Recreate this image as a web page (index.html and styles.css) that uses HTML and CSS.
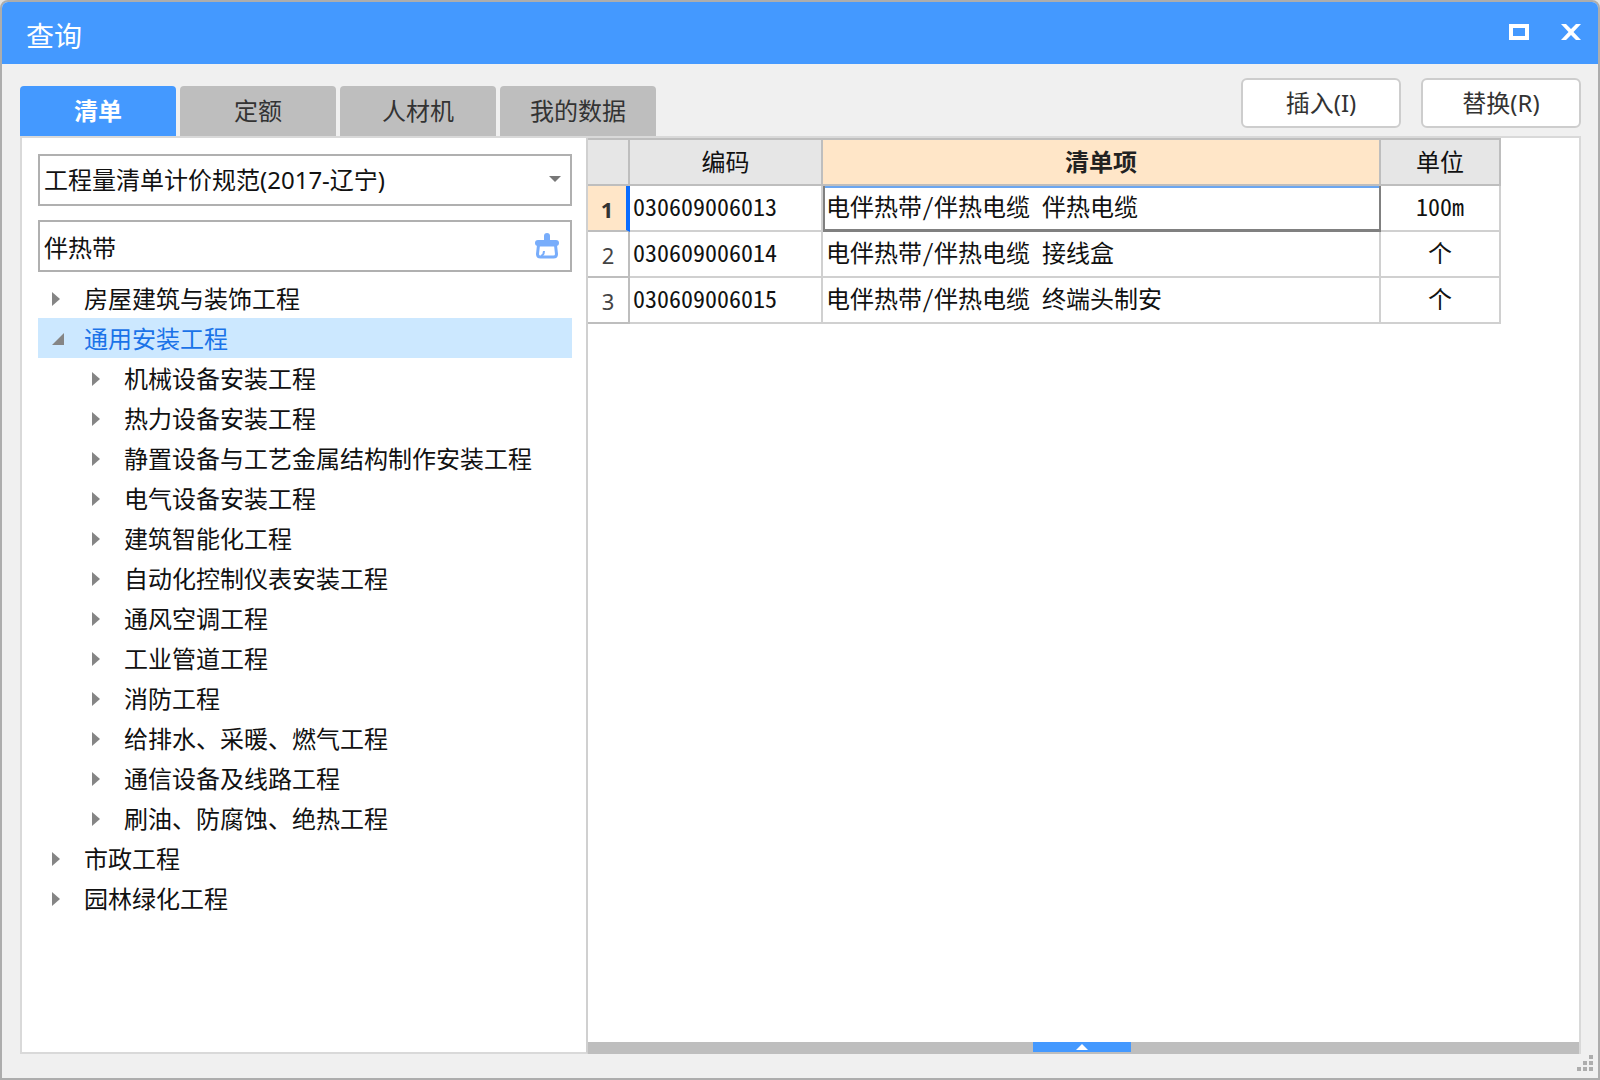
FILE: index.html
```html
<!DOCTYPE html>
<html lang="zh-CN">
<head>
<meta charset="utf-8">
<meta name="viewport" content="width=device-width, initial-scale=1">
<title>查询</title>
<link rel="stylesheet" href="styles.css">
</head>
<body>
<div class="window">
  <header class="titlebar">
    <h1 class="title">查询</h1>
    <div class="window-controls">
      <button class="control" type="button" aria-label="最大化">
        <svg width="22" height="18" viewBox="0 0 22 18"><path d="M1 1h20v16H1zM5 5v8h12V5z" fill="#fff" fill-rule="evenodd"/></svg>
      </button>
      <button class="control" type="button" aria-label="关闭">
        <svg width="22" height="18" viewBox="0 0 22 18"><path d="M1 1h5l5 5 5-5h5l-7.500 8 7.500 8h-5l-5-5-5 5H1l7.500-8z" fill="#fff"/></svg>
      </button>
    </div>
  </header>

  <div class="toolbar">
    <div class="tabs" role="tablist">
      <button class="tab tab-active" type="button" role="tab" aria-selected="true">清单</button>
      <button class="tab" type="button" role="tab" aria-selected="false">定额</button>
      <button class="tab" type="button" role="tab" aria-selected="false">人材机</button>
      <button class="tab" type="button" role="tab" aria-selected="false">我的数据</button>
    </div>
    <div class="actions">
      <button class="action" type="button">插入(I)</button>
      <button class="action" type="button">替换(R)</button>
    </div>
  </div>

  <main class="panels">
    <aside class="sidebar">
      <div class="field">
        <select class="field-input" aria-label="计价规范"><option>工程量清单计价规范(2017-辽宁)</option></select>
        <svg class="field-arrow" width="12" height="6" viewBox="0 0 12 6"><path d="M0 0h12L6 6z" fill="#777"/></svg>
      </div>
      <div class="field">
        <input class="field-input" type="text" value="伴热带" aria-label="搜索">
        <button class="clear" type="button" aria-label="清空">
          <svg width="24" height="26" viewBox="0 0 24 26">
            <path d="M12 3v6" stroke="#78adfb" stroke-width="6" stroke-linecap="round"/>
            <rect x="0" y="7" width="24" height="6" rx="3" fill="#78adfb"/>
            <path d="M3.500 12 2.500 21q0 3 3 3h13q3 0 3-3l-1-9" fill="#fff" stroke="#78adfb" stroke-width="3" stroke-linejoin="round"/>
            <path d="M3 12h18" stroke="#78adfb" stroke-width="3"/>
            <path d="M9 18q0 4-3 5" fill="none" stroke="#78adfb" stroke-width="2"/>
          </svg>
        </button>
      </div>
      <ul class="tree">
        <li><button class="node" type="button"><span class="arrow"></span>房屋建筑与装饰工程</button></li>
        <li>
          <button class="node node-selected" type="button" aria-expanded="true"><span class="arrow arrow-open"></span>通用安装工程</button>
          <ul class="branch">
            <li><button class="node" type="button"><span class="arrow"></span>机械设备安装工程</button></li>
            <li><button class="node" type="button"><span class="arrow"></span>热力设备安装工程</button></li>
            <li><button class="node" type="button"><span class="arrow"></span>静置设备与工艺金属结构制作安装工程</button></li>
            <li><button class="node" type="button"><span class="arrow"></span>电气设备安装工程</button></li>
            <li><button class="node" type="button"><span class="arrow"></span>建筑智能化工程</button></li>
            <li><button class="node" type="button"><span class="arrow"></span>自动化控制仪表安装工程</button></li>
            <li><button class="node" type="button"><span class="arrow"></span>通风空调工程</button></li>
            <li><button class="node" type="button"><span class="arrow"></span>工业管道工程</button></li>
            <li><button class="node" type="button"><span class="arrow"></span>消防工程</button></li>
            <li><button class="node" type="button"><span class="arrow"></span>给排水、采暖、燃气工程</button></li>
            <li><button class="node" type="button"><span class="arrow"></span>通信设备及线路工程</button></li>
            <li><button class="node" type="button"><span class="arrow"></span>刷油、防腐蚀、绝热工程</button></li>
          </ul>
        </li>
        <li><button class="node" type="button"><span class="arrow"></span>市政工程</button></li>
        <li><button class="node" type="button"><span class="arrow"></span>园林绿化工程</button></li>
      </ul>
    </aside>

    <section class="results">
      <div class="grid-area">
        <table class="grid">
          <colgroup><col class="col-index"><col class="col-code"><col><col class="col-unit"></colgroup>
          <thead>
            <tr><th></th><th scope="col">编码</th><th scope="col" class="current">清单项</th><th scope="col">单位</th></tr>
          </thead>
          <tbody>
            <tr><th scope="row" class="index index-current">1</th><td>030609006013</td><td class="editing">电伴热带/伴热电缆 伴热电缆</td><td class="unit">100m</td></tr>
            <tr><th scope="row" class="index">2</th><td>030609006014</td><td>电伴热带/伴热电缆 接线盒</td><td class="unit">个</td></tr>
            <tr><th scope="row" class="index">3</th><td>030609006015</td><td>电伴热带/伴热电缆 终端头制安</td><td class="unit">个</td></tr>
          </tbody>
        </table>
      </div>
      <div class="splitter">
        <button class="splitter-handle" type="button" aria-label="展开">
          <svg width="12" height="6" viewBox="0 0 12 6"><path d="M0 6h12L6 0z" fill="#fff"/></svg>
        </button>
      </div>
    </section>
  </main>

  <footer class="statusbar">
    <svg width="18" height="18" viewBox="0 0 18 18" fill="#adadad">
      <path d="M12 0h4v4h-4zM6 6h4v4H6zM12 6h4v4h-4zM0 12h4v4H0zM6 12h4v4H6zM12 12h4v4h-4z"/>
    </svg>
  </footer>
</div>
</body>
</html>
```
FILE: styles.css
```css
* {
  box-sizing: border-box;
}

body {
  margin: 0;
  background: #e4e4e4;
  color: #111;
  font: 24px/40px "Noto Sans", "Noto Sans CJK SC", sans-serif;
}

button,
input,
select {
  margin: 0;
  padding: 0;
  border: 0;
  background: none;
  color: inherit;
  font: inherit;
}

svg {
  display: block;
}

.window {
  display: flex;
  flex-direction: column;
  min-height: 100vh;
  border: 2px solid #adadad;
  border-radius: 8px 8px 0 0;
  background: #f0f0f0;
  overflow: hidden;
}

.titlebar {
  display: flex;
  justify-content: space-between;
  height: 62px;
  padding: 0 16px 0 24px;
  background: #4499ff;
  color: #fff;
}

.title {
  margin: 0;
  padding-top: 4px;
  font-size: 28px;
  font-weight: 400;
  line-height: 60px;
}

.window-controls {
  display: flex;
  align-items: center;
  gap: 30px;
  padding-bottom: 2px;
}

.toolbar {
  display: flex;
  justify-content: space-between;
  height: 72px;
  padding: 14px 17px 0 18px;
}

.tabs {
  display: flex;
  align-items: flex-end;
  gap: 4px;
}

.tab {
  width: 156px;
  height: 50px;
  border-radius: 4px 4px 0 0;
  background: #bebebe;
  color: #333;
}

.tab-active {
  background: #4499ff;
  color: #fff;
  font-weight: 700;
}

.actions {
  display: flex;
  gap: 20px;
}

.action {
  width: 160px;
  height: 50px;
  border: 2px solid #cdcdcd;
  border-radius: 6px;
  background: #fff;
  color: #333;
}

.panels {
  display: flex;
  flex: 1;
  margin: 0 17px 0 18px;
  border: 2px solid #d9d9d9;
  border-bottom: 0;
  background: #fff;
}

.sidebar {
  flex: none;
  width: 566px;
  padding: 16px 14px 16px 16px;
  border-right: 2px solid #d0d0d0;
  border-bottom: 2px solid #d9d9d9;
}

.field {
  position: relative;
  margin-bottom: 14px;
}

.field-input {
  display: block;
  width: 100%;
  height: 52px;
  padding: 0 48px 0 4px;
  border: 2px solid #b0b0b0;
  border-radius: 0;
  background: #fff;
  appearance: none;
}

.field-arrow {
  position: absolute;
  top: 22px;
  right: 11px;
  pointer-events: none;
}

.clear {
  position: absolute;
  top: 13px;
  right: 13px;
}

.tree,
.branch {
  margin: 0;
  padding: 0;
  list-style: none;
}

.tree {
  margin-top: -8px;
}

.node {
  display: flex;
  align-items: center;
  gap: 20px;
  width: 100%;
  height: 40px;
  padding-top: 2px;
  padding-left: 14px;
  text-align: left;
  white-space: nowrap;
}

.branch .node {
  padding-left: 54px;
}

.node-selected {
  background: #cce8ff;
  color: #1a73e8;
}

.arrow {
  flex: none;
  width: 12px;
  height: 14px;
  background: #858585;
  clip-path: polygon(0 0, 8px 50%, 0 100%);
}

.arrow-open {
  height: 12px;
  clip-path: polygon(100% 0, 100% 100%, 0 100%);
}

.results {
  display: flex;
  flex: 1;
  flex-direction: column;
  min-width: 0;
}

.grid-area {
  flex: 1;
  padding-right: 78px;
}

/* Half-width Latin keeps codes aligned with the full-width characters. */
.grid {
  width: 100%;
  border-spacing: 0;
  border-top: 2px solid #bebebe;
  font-family: "Noto Sans CJK SC", sans-serif;
  font-feature-settings: "hwid";
  table-layout: fixed;
}

.col-index {
  width: 42px;
}

.col-code {
  width: 193px;
}

.col-unit {
  width: 120px;
}

.grid th,
.grid td {
  height: 46px;
  padding: 0 3px 4px;
  border: solid #d0d0d0;
  border-width: 0 2px 2px 0;
  line-height: 40px;
  text-align: left;
  white-space: nowrap;
  overflow: hidden;
}

.grid thead th {
  padding-bottom: 2px;
  border-color: #bebebe;
  background: #e6e6e6;
  font-weight: 400;
  text-align: center;
}

.grid thead .current {
  background: #ffe6c8;
  color: #222;
  font-weight: 700;
}

.grid .index {
  padding: 2px 0 0;
  border-color: #bebebe;
  color: #444;
  font-family: "Noto Sans", sans-serif;
  font-size: 22px;
  font-weight: 400;
  text-align: center;
}

.grid .index-current {
  border-right: 4px solid #0a6cff;
  background: #ffe6c8;
  color: #333;
  font-weight: 700;
}

.grid .editing {
  border-color: #808080;
  box-shadow: inset 2px 0 #808080, inset 0 2px #6ba6f0, inset 0 -1px #808080;
}

.grid .unit {
  text-align: center;
}

.splitter {
  display: flex;
  justify-content: center;
  height: 12px;
  padding: 0 4px 2px 0;
  background: #bebebe;
}

.splitter-handle {
  display: flex;
  align-items: center;
  justify-content: center;
  width: 98px;
  background: #4499ff;
}

.statusbar {
  display: flex;
  align-items: flex-end;
  justify-content: flex-end;
  height: 24px;
  padding: 0 3px 5px;
}
```
